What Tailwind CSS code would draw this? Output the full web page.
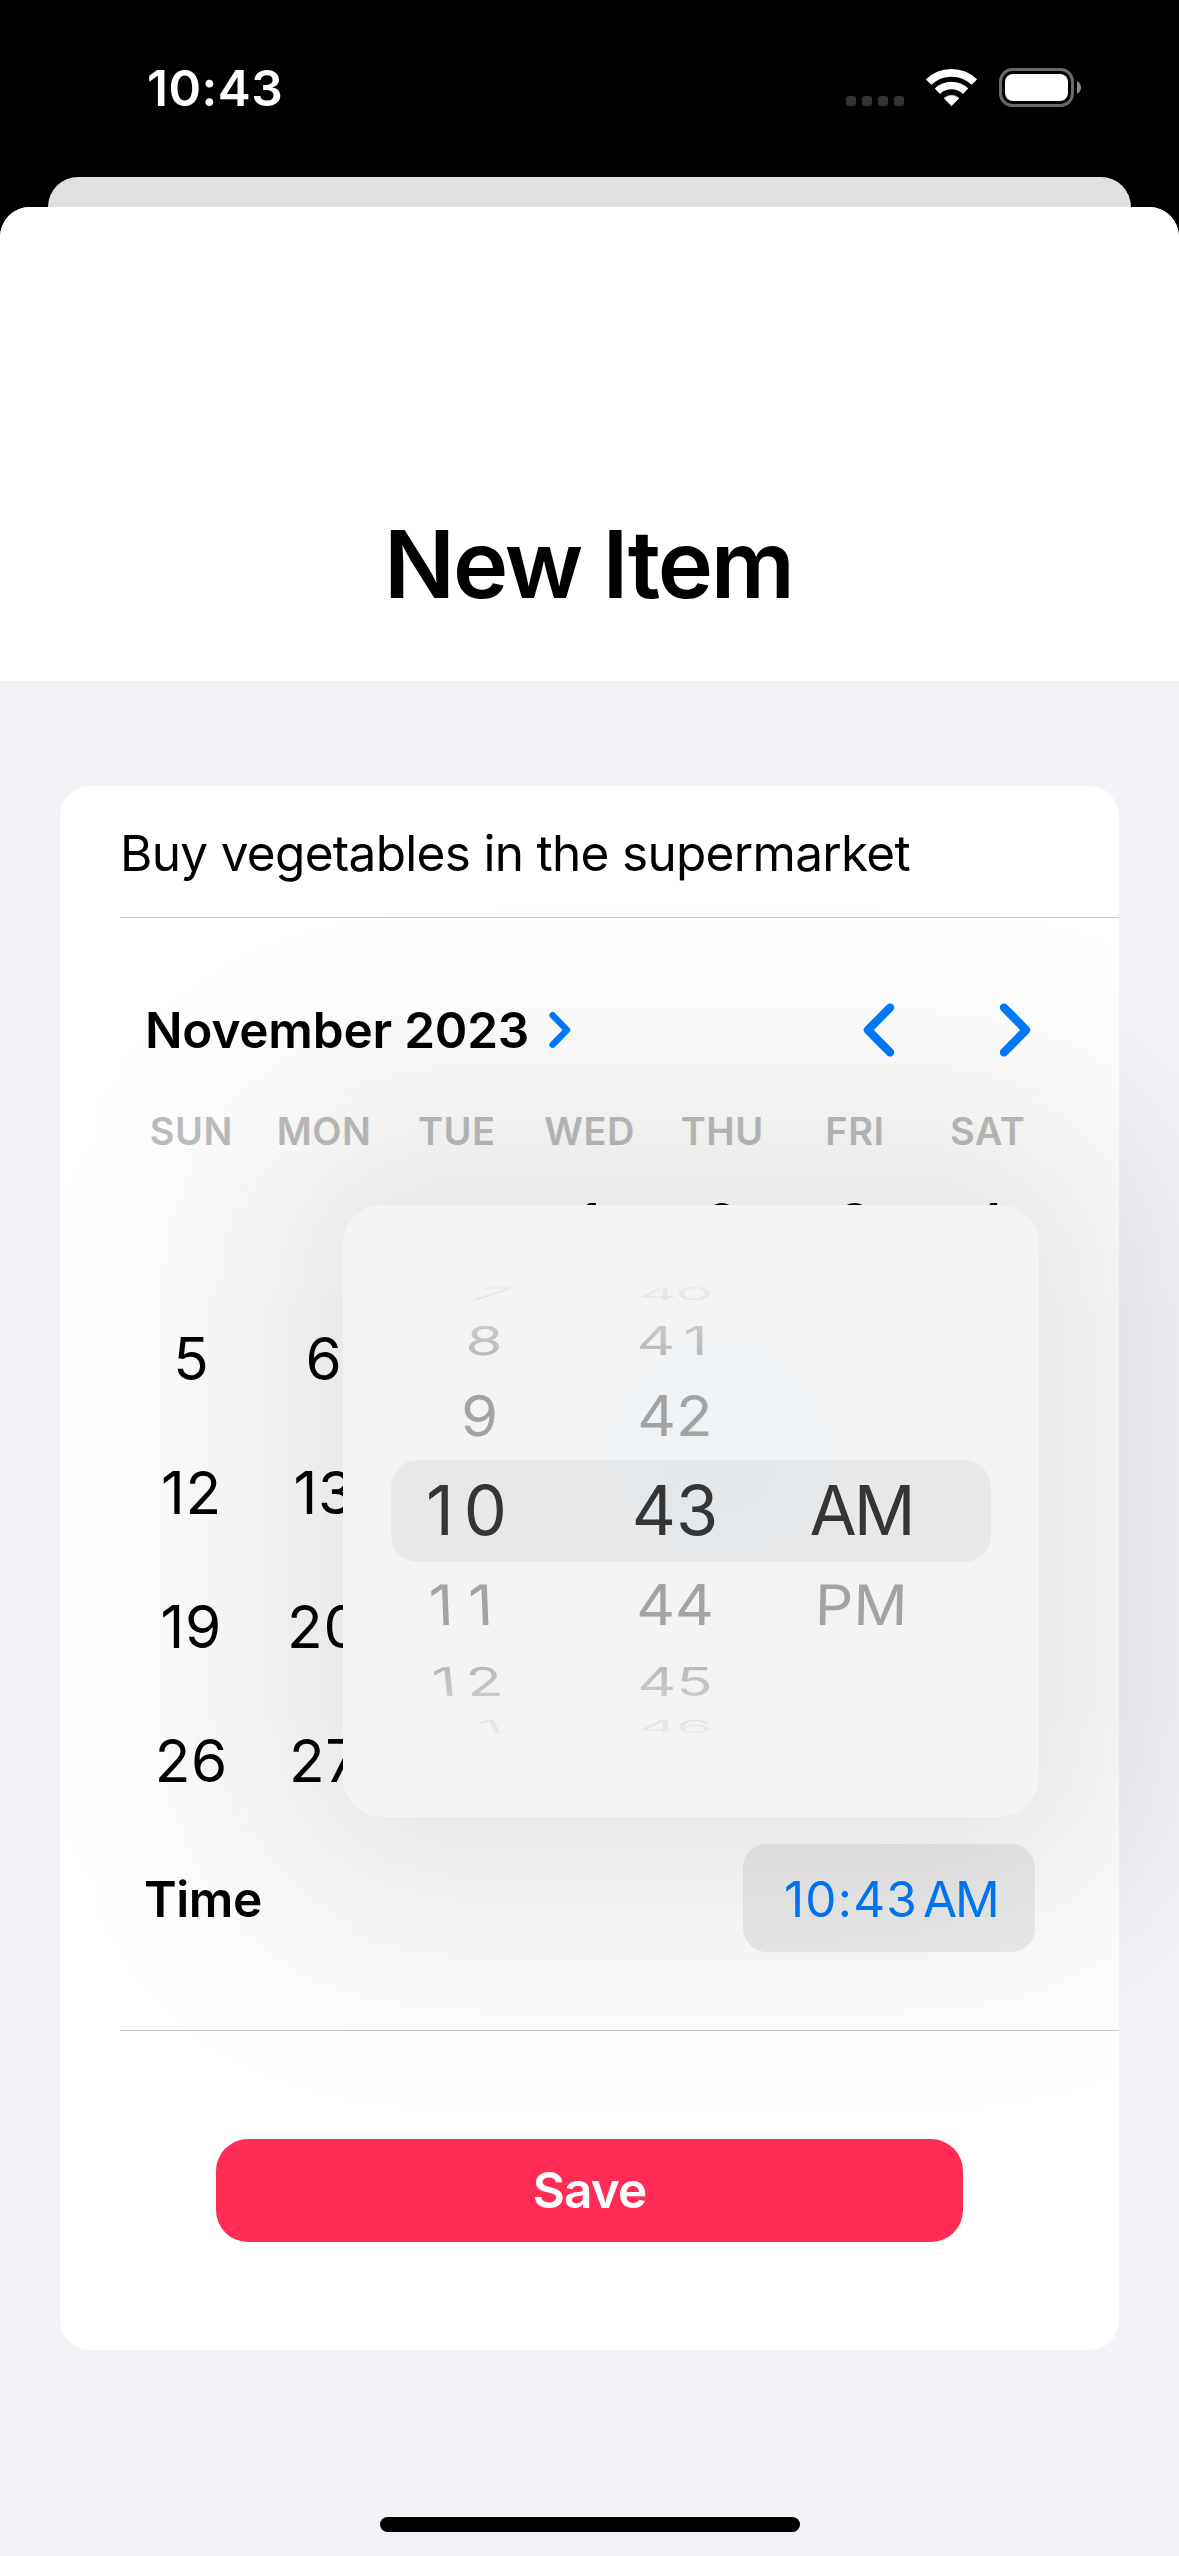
<!DOCTYPE html>
<html lang="en">
<head>
<meta charset="utf-8">
<title>New Item</title>
<script src="https://cdn.jsdelivr.net/npm/@tailwindcss/browser@4"></script>
</head>
<body class="bg-black">
<div class="relative flex h-[2556px] w-[1179px] flex-col overflow-hidden bg-black font-['Inter',sans-serif] text-black">

  <!-- Status bar -->
  <header class="flex h-[177px] shrink-0 justify-between pl-[147px] pr-[98px] pt-[58px] text-white">
    <span class="h-[60px] text-[49.5px] font-semibold leading-[60px] tracking-[0.5px]">10:43</span>
    <div class="flex h-[60px] items-start">
      <div class="mt-[38px] flex gap-[6px]">
        <i class="size-[10px] rounded-[3px] bg-[#333]"></i>
        <i class="size-[10px] rounded-[3px] bg-[#333]"></i>
        <i class="size-[10px] rounded-[3px] bg-[#333]"></i>
        <i class="size-[10px] rounded-[3px] bg-[#333]"></i>
      </div>
      <svg class="ml-[22px] mt-[11px] h-[38px] w-[51px]" viewBox="0 0 51 38" fill="none" stroke="#fff">
        <path d="M2.6 13.1A33 33 0 0 1 48.4 13.1" stroke-width="7.7"/>
        <path d="M11.4 22.2A20.3 20.3 0 0 1 39.6 22.2" stroke-width="7.5"/>
        <path d="M25.5 36.8L18.2 29.2A11 11 0 0 1 32.8 29.2Z" fill="#fff" stroke-width="0.8" stroke-linejoin="round"/>
      </svg>
      <svg class="ml-[22px] mt-[10px] h-[39px] w-[82px]" viewBox="0 0 82 39" fill="none">
        <rect x="1.5" y="1.5" width="72" height="36" rx="12" stroke="#6a6a6a" stroke-width="3"/>
        <rect x="6" y="6" width="63" height="27" rx="8" fill="#fff"/>
        <path d="M78 13.2C80.6 14.3 82 16.8 82 19.5S80.6 24.7 78 25.8Z" fill="#8a8a8a"/>
      </svg>
    </div>
  </header>

  <!-- Presenting view behind the sheet -->
  <div class="mx-[48px] h-[60px] shrink-0 rounded-t-[30px] bg-[#e0e0e0]"></div>

  <!-- Sheet -->
  <section class="-mt-[30px] flex grow flex-col overflow-hidden rounded-t-[30px] bg-[#f2f2f7]">
    <div class="flex h-[474px] shrink-0 justify-center bg-white pr-[2px] pt-[297px]">
      <h1 class="h-[120px] text-[93.5px] font-semibold leading-[120px] tracking-[-2.1px]">New Item</h1>
    </div>

    <!-- Form card -->
    <main class="mx-[60px] mt-[105px] flex h-[1564px] flex-col rounded-[30px] bg-white">
      <div class="ml-[60px] flex h-[132px] items-center border-b border-[#c6c6c8] pt-[3px]">
        <span class="text-[49.5px] tracking-[-0.69px]">Buy vegetables in the supermarket</span>
      </div>

      <div class="ml-[60px] flex h-[1113px] flex-col border-b border-[#c6c6c8] pr-[62px] pt-[60px]">
        <div class="flex h-[104px] items-center justify-between pl-[25px] pr-[25px]">
          <div class="flex items-center gap-[20px]">
            <span class="text-[49.5px] font-semibold tracking-[-0.21px]">November 2023</span>
            <svg class="h-[38px] w-[22px]" viewBox="0 0 22 38" fill="none" stroke="#007aff" stroke-width="6.4" stroke-linecap="round" stroke-linejoin="round"><path d="M3.6 4.2L18 19L3.6 33.8"/></svg>
          </div>
          <div class="flex gap-[104px]">
            <svg class="h-[54px] w-[33px]" viewBox="0 0 33 54" fill="none" stroke="#007aff" stroke-width="8.4" stroke-linecap="round" stroke-linejoin="round"><path d="M28 4.6L6 27L28 49.4"/></svg>
            <svg class="h-[54px] w-[33px]" viewBox="0 0 33 54" fill="none" stroke="#007aff" stroke-width="8.4" stroke-linecap="round" stroke-linejoin="round"><path d="M5 4.6L27 27L5 49.4"/></svg>
          </div>
        </div>

        <div class="ml-[5px] mt-[22px] grid h-[54px] w-[929px] grid-cols-7 items-center text-center text-[38px] font-semibold leading-[46px] tracking-[0.5px] text-[#bdbdbf]">
          <span>SUN</span><span>MON</span><span>TUE</span><span>WED</span><span>THU</span><span>FRI</span><span>SAT</span>
        </div>

        <div class="ml-[5px] grid h-[670px] w-[929px] grid-cols-7 grid-rows-5 items-center text-center text-[58.5px] leading-[70px] tracking-[0.7px]">
          <span></span><span></span><span></span><span>1</span><span>2</span><span>3</span><span>4</span>
          <span>5</span><span>6</span><span>7</span><span>8</span><span>9</span><span>10</span><span>11</span>
          <span>12</span><span>13</span><span>14</span><span>15</span><span>16</span><span>17</span><span>18</span>
          <span>19</span><span>20</span><span>21</span><span>22</span><span>23</span><span>24</span><span>25</span>
          <span>26</span><span>27</span><span>28</span><span>29</span><span>30</span><span></span><span></span>
        </div>

        <div class="mt-[16px] flex h-[108px] items-center justify-between pl-[24px] pr-[22px]">
          <span class="mt-[2px] text-[49.5px] font-semibold tracking-[-0.4px]">Time</span>
          <span class="flex h-[108px] w-[292px] items-center gap-[5px] rounded-[24px] bg-[#eeeeef] pl-[41px] pt-[2px] text-[49.5px] text-[#007aff]">
            <span class="tracking-[1.18px]">10:43</span><span class="tracking-[-2.15px]">AM</span>
          </span>
        </div>
      </div>

      <button class="mx-auto mt-[108px] h-[103px] w-[747px] rounded-[32px] bg-[#ff2d55] text-[49.5px] font-semibold tracking-[-0.88px] text-white">Save</button>
    </main>

    <div class="mx-auto mb-[24px] mt-auto h-[15px] w-[420px] rounded-full bg-black"></div>
  </section>

  <!-- Soft shadow cast by the popover -->
  <div class="absolute left-[238px] top-[1090px] h-[842px] w-[906px] rounded-[150px] bg-[rgba(6,6,0,0.098)] blur-[95px]"></div>

  <!-- Time picker popover -->
  <div class="absolute left-[343px] top-[1205px] h-[612px] w-[696px] rounded-[39px] bg-[#f3f3f3] bg-[radial-gradient(circle_at_378px_245px,#eff3f6_0px,#f1f3f5_110px,#f3f3f3_300px)] pt-[75.5px]">
    <div class="absolute left-[48px] top-[254.5px] h-[102px] w-[600px] rounded-[27px] bg-[rgba(60,60,70,0.06)]"></div>
    <div class="relative flex text-[60px] text-[#a3a3a3]">

      <div class="flex w-[166px] flex-col items-end">
        <div class="flex h-[27px] items-center pr-[1px]"><span class="-skew-x-[20deg] scale-y-[0.29] bg-linear-to-b from-[#ececec] to-[#e0e0e0] bg-clip-text leading-[74px] text-transparent">7</span></div>
        <div class="flex h-[65px] items-center pr-[6px]"><span class="-skew-x-3 scale-y-[0.66] bg-linear-to-b from-[#d0d0d0] to-[#b4b4b4] bg-clip-text leading-[74px] text-transparent">8</span></div>
        <div class="flex h-[87px] items-center pr-[11px]"><span class="-skew-x-1 scale-y-[0.93] leading-[74px]">9</span></div>
        <div class="flex h-[102px] items-center pr-[2px] text-[68.5px] text-[#353536]"><span class="leading-[84px]"><span class="tracking-[9.8px]">1</span>0</span></div>
        <div class="flex h-[87px] items-center pr-[16px]"><span class="skew-x-2 scale-y-[0.93] leading-[74px]"><span class="tracking-[15px]">1</span>1</span></div>
        <div class="flex h-[65px] items-center pr-[6px]"><span class="skew-x-4 scale-y-[0.66] bg-linear-to-b from-[#b4b4b4] to-[#d0d0d0] bg-clip-text leading-[74px] text-transparent"><span class="tracking-[9.6px]">1</span>2</span></div>
        <div class="flex h-[27px] items-center pr-[7px]"><span class="skew-x-[8deg] scale-y-[0.29] bg-linear-to-b from-[#e0e0e0] to-[#ececec] bg-clip-text leading-[74px] text-transparent">1</span></div>
      </div>

      <div class="ml-[106px] flex w-[120px] flex-col items-center">
        <div class="flex h-[27px] items-center"><span class="scale-y-[0.29] bg-linear-to-b from-[#ececec] to-[#e0e0e0] bg-clip-text leading-[74px] tracking-[-1.5px] text-transparent">40</span></div>
        <div class="flex h-[65px] items-center pr-[6px]"><span class="scale-y-[0.66] bg-linear-to-b from-[#d0d0d0] to-[#b4b4b4] bg-clip-text leading-[74px] text-transparent"><span class="tracking-[8px]">4</span>1</span></div>
        <div class="flex h-[87px] items-center"><span class="scale-y-[0.93] leading-[74px]">42</span></div>
        <div class="flex h-[102px] items-center text-[68.5px] text-[#353536]"><span class="leading-[84px]">43</span></div>
        <div class="flex h-[87px] items-center"><span class="scale-y-[0.93] leading-[74px]">44</span></div>
        <div class="flex h-[65px] items-center"><span class="scale-y-[0.66] bg-linear-to-b from-[#b4b4b4] to-[#d0d0d0] bg-clip-text leading-[74px] text-transparent">45</span></div>
        <div class="flex h-[27px] items-center"><span class="scale-y-[0.29] bg-linear-to-b from-[#e0e0e0] to-[#ececec] bg-clip-text leading-[74px] tracking-[-1.5px] text-transparent">46</span></div>
      </div>

      <div class="ml-[66px] flex w-[120px] flex-col items-center pt-[179px]">
        <div class="flex h-[102px] items-center text-[68.5px] tracking-[-3px] text-[#353536]"><span class="leading-[84px]">AM</span></div>
        <div class="flex h-[87px] items-center"><span class="-skew-x-1 scale-y-[0.93] leading-[74px]">PM</span></div>
      </div>
    </div>
  </div>
</div>
</body>
</html>
